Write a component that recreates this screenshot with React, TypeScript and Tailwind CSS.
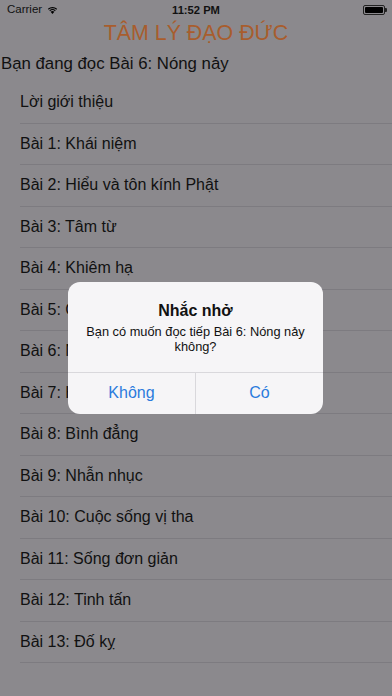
import React from "react";

const items = [
  "Lời giới thiệu",
  "Bài 1: Khái niệm",
  "Bài 2: Hiểu và tôn kính Phật",
  "Bài 3: Tâm từ",
  "Bài 4: Khiêm hạ",
  "Bài 5: Chân thật",
  "Bài 6: Nóng nảy",
  "Bài 7: Hối hận",
  "Bài 8: Bình đẳng",
  "Bài 9: Nhẫn nhục",
  "Bài 10: Cuộc sống vị tha",
  "Bài 11: Sống đơn giản",
  "Bài 12: Tinh tấn",
  "Bài 13: Đố kỵ",
];

function Wifi() {
  return (
    <svg width="11" height="8" viewBox="0 0 22 16" className="ml-[5px]">
      <path d="M11 16 L7.2 11.6 A5.6 5.6 0 0 1 14.8 11.6 Z" fill="#000" />
      <path d="M4.6 8.8 A9.4 9.4 0 0 1 17.4 8.8 L15.9 10.5 A7.2 7.2 0 0 0 6.1 10.5 Z" fill="#000" />
      <path d="M1.8 5.6 A13.6 13.6 0 0 1 20.2 5.6 L18.7 7.3 A11.4 11.4 0 0 0 3.3 7.3 Z" fill="#000" />
    </svg>
  );
}

export default function App() {
  return (
    <div
      className="relative w-[392px] h-[696px] overflow-hidden bg-[#8b898d] text-[#111]"
      style={{ fontFamily: '"Liberation Sans", Arial, sans-serif' }}
    >
      {/* status bar */}
      <div className="relative h-[20px] flex items-center pl-[7px] pr-[5px]">
        <span className="text-[11.5px] text-[#111]">Carrier</span>
        <Wifi />
        <span className="absolute left-0 right-0 text-center text-[11.2px] font-bold pointer-events-none">11:52 PM</span>
        <div className="ml-auto flex items-center">
          <div className="w-[22px] h-[10px] border border-[#222] rounded-[2px] p-[1px]">
            <div className="w-full h-full bg-black rounded-[1px]" />
          </div>
          <div className="w-[2px] h-[4px] bg-[#222] rounded-r-[1px]" />
        </div>
      </div>
      {/* title */}
      <div className="h-[25px] flex items-center justify-center text-[21.4px] leading-[24px] text-[#a85d2d]">
        TÂM LÝ ĐẠO ĐỨC
      </div>
      {/* header */}
      <div className="h-[37px] flex items-center pl-[1px] text-[16.8px]">Bạn đang đọc Bài 6: Nóng nảy</div>
      {/* list */}
      <div>
        {items.map((t) => (
          <div key={t} className="h-[41.5px] pl-[20px]">
            <div className="h-full flex items-center border-b border-[#7d7b80] text-[16px] whitespace-nowrap">{t}</div>
          </div>
        ))}
      </div>
      {/* alert */}
      <div className="absolute left-[68px] top-[282px] w-[255px] h-[132px] rounded-[12px] bg-[#f6f5f7] flex flex-col overflow-hidden">
        <div className="flex-1 flex flex-col items-center pt-[19px] px-[16px] border-b border-[#d9d8dc]">
          <div className="text-[16px] leading-[20px] font-bold text-[#111]">Nhắc nhở</div>
          <div className="mt-[3px] text-[12.8px] leading-[15.2px] text-center text-[#111]">
            Bạn có muốn đọc tiếp Bài 6: Nóng nảy không?
          </div>
        </div>
        <div className="h-[41.5px] flex text-[16px] text-[#2b7bdd]">
          <div className="flex-1 flex items-center justify-center border-r border-[#d9d8dc]">Không</div>
          <div className="flex-1 flex items-center justify-center">Có</div>
        </div>
      </div>
    </div>
  );
}
